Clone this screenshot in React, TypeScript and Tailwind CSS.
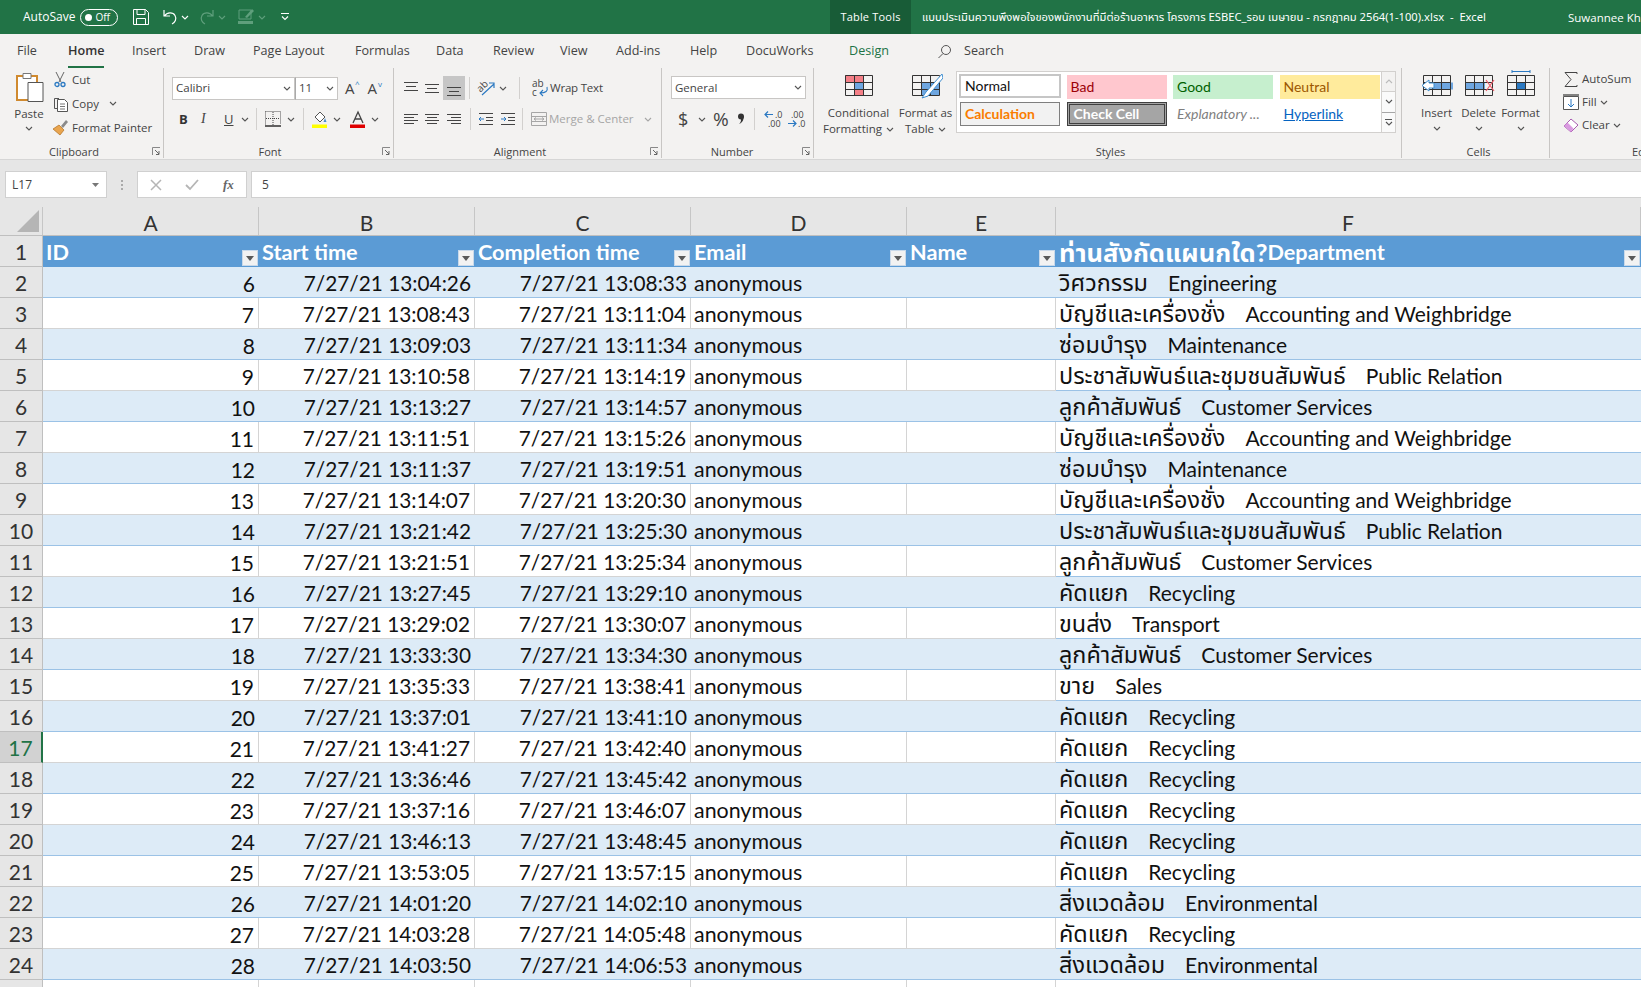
import React from "react";

const ui = { fontFamily: '"Open Sans","Noto Sans",sans-serif' };
const cal = { fontFamily: 'Lato,"Noto Sans","Noto Sans Thai","Liberation Sans",sans-serif' };

const Chev = ({ c = "#555", className = "" }: { c?: string; className?: string }) => (
  <svg width="8" height="5" viewBox="0 0 8 5" className={className}><path d="M1 1l3 3 3-3" fill="none" stroke={c} strokeWidth="1.1" /></svg>
);

const Launcher = () => (
  <svg width="9" height="9" viewBox="0 0 9 9" className="shrink-0"><path d="M0.5 8V0.5H8" fill="none" stroke="#888" /><path d="M3 3l4 4M7 4v3.5H4" fill="none" stroke="#666" /></svg>
);

const Sep = ({ className = "h-[22px] mx-[6px]" }: { className?: string }) => <div className={`w-px bg-[#d2d0ce] ${className}`} />;

const Lines = ({ kind }: { kind: string }) => {
  const rows: Record<string, number[][]> = {
    top: [[2, 16, 3], [4, 14, 7], [2, 16, 11]],
    mid: [[2, 16, 5], [4, 14, 9], [2, 16, 13]],
    bot: [[2, 16, 8], [4, 14, 12], [2, 16, 16]],
    l: [[2, 16, 4], [2, 12, 7], [2, 16, 10], [2, 12, 13]],
    c: [[2, 16, 4], [4, 14, 7], [2, 16, 10], [4, 14, 13]],
    r: [[2, 16, 4], [6, 16, 7], [2, 16, 10], [6, 16, 13]],
  };
  return (
    <svg width="18" height="18" viewBox="0 0 18 18">
      {rows[kind].map((r, i) => <path key={i} d={`M${r[0]} ${r[2] + 0.5}H${r[1]}`} stroke="#444" />)}
    </svg>
  );
};

const GridBox = ({ children, over }: { children?: React.ReactNode; over?: React.ReactNode }) => (
  <svg width="34" height="30" viewBox="0 0 34 30">
    {children}
    <path d="M3.500 5.500h27v20h-27zM12.500 5.500v20M21.500 5.500v20M3.500 12.500h27M3.500 19.500h27" fill="none" stroke="#333" />
    {over}
  </svg>
);

const GalleryCell = ({ className, children }: { className: string; children: React.ReactNode }) => (
  <div className={`h-[24px] flex items-center px-[4px] text-[14px] whitespace-nowrap ${className}`}>{children}</div>
);

const Group = ({ className, label, launcher, children, labelClass = "" }: { className: string; label: string; launcher?: boolean; children: React.ReactNode; labelClass?: string }) => (
  <div className={`flex flex-col h-[90px] shrink-0 border-r border-[#c8c6c4] ${className}`}>
    <div className="h-[76px] flex">{children}</div>
    <div className="h-[14px] flex items-center text-[11px] text-[#444] leading-none">
      <span className={`flex-1 text-center ${labelClass}`}>{label}</span>
      {launcher && <span className="mr-[2px]"><Launcher /></span>}
    </div>
  </div>
);

const tabs: [string, string][] = [
  ["File", "w-[68px] pl-[17px]"],
  ["Home", "w-[64px]"],
  ["Insert", "w-[62px]"],
  ["Draw", "w-[59px]"],
  ["Page Layout", "w-[102px]"],
  ["Formulas", "w-[81px]"],
  ["Data", "w-[57px]"],
  ["Review", "w-[67px]"],
  ["View", "w-[56px]"],
  ["Add-ins", "w-[74px]"],
  ["Help", "w-[56px]"],
  ["DocuWorks", "w-[103px]"],
];

const rows: [number, number, string, string, string, string][] = [
  [2, 6, "13:04:26", "13:08:33", "วิศวกรรม", "Engineering"],
  [3, 7, "13:08:43", "13:11:04", "บัญชีและเครื่องชั่ง", "Accounting and Weighbridge"],
  [4, 8, "13:09:03", "13:11:34", "ซ่อมบำรุง", "Maintenance"],
  [5, 9, "13:10:58", "13:14:19", "ประชาสัมพันธ์และชุมชนสัมพันธ์", "Public Relation"],
  [6, 10, "13:13:27", "13:14:57", "ลูกค้าสัมพันธ์", "Customer Services"],
  [7, 11, "13:11:51", "13:15:26", "บัญชีและเครื่องชั่ง", "Accounting and Weighbridge"],
  [8, 12, "13:11:37", "13:19:51", "ซ่อมบำรุง", "Maintenance"],
  [9, 13, "13:14:07", "13:20:30", "บัญชีและเครื่องชั่ง", "Accounting and Weighbridge"],
  [10, 14, "13:21:42", "13:25:30", "ประชาสัมพันธ์และชุมชนสัมพันธ์", "Public Relation"],
  [11, 15, "13:21:51", "13:25:34", "ลูกค้าสัมพันธ์", "Customer Services"],
  [12, 16, "13:27:45", "13:29:10", "คัดแยก", "Recycling"],
  [13, 17, "13:29:02", "13:30:07", "ขนส่ง", "Transport"],
  [14, 18, "13:33:30", "13:34:30", "ลูกค้าสัมพันธ์", "Customer Services"],
  [15, 19, "13:35:33", "13:38:41", "ขาย", "Sales"],
  [16, 20, "13:37:01", "13:41:10", "คัดแยก", "Recycling"],
  [17, 21, "13:41:27", "13:42:40", "คัดแยก", "Recycling"],
  [18, 22, "13:36:46", "13:45:42", "คัดแยก", "Recycling"],
  [19, 23, "13:37:16", "13:46:07", "คัดแยก", "Recycling"],
  [20, 24, "13:46:13", "13:48:45", "คัดแยก", "Recycling"],
  [21, 25, "13:53:05", "13:57:15", "คัดแยก", "Recycling"],
  [22, 26, "14:01:20", "14:02:10", "สิ่งแวดล้อม", "Environmental"],
  [23, 27, "14:03:28", "14:05:48", "คัดแยก", "Recycling"],
  [24, 28, "14:03:50", "14:06:53", "สิ่งแวดล้อม", "Environmental"],
];

const gridCols = "grid grid-cols-[43px_216px_216px_216px_216px_149px_585px]";

const Filter = () => (
  <span className="absolute right-[1px] bottom-[1px] w-[16px] h-[16px] bg-[#f2f2f2] border border-[#c9d9ea] flex items-center justify-center">
    <svg width="8" height="5" viewBox="0 0 8 5"><path d="M0 0h8L4 5z" fill="#595959" /></svg>
  </span>
);

const heads = ["ID", "Start time", "Completion time", "Email", "Name"];

export default function App() {
  return (
    <div className="w-[1641px] h-[987px] overflow-hidden flex flex-col bg-white text-[#333]" style={ui}>
      {/* Title bar */}
      <div className="h-[34px] shrink-0 bg-[#217346] flex items-center text-white text-[12px] whitespace-nowrap">
        <span className="ml-[23px]">AutoSave</span>
        <span className="ml-[5px] w-[38px] h-[17px] rounded-full border border-white flex items-center px-[4px] text-[10px] gap-[3px]">
          <span className="w-[7px] h-[7px] rounded-full bg-white" />Off
        </span>
        <svg width="18" height="18" viewBox="0 0 18 18" className="ml-[14px]"><path d="M1.500 1.500h12l3 3v12h-15zM5 1.500v5h8v-5M4.500 16.500v-6h9v6" fill="none" stroke="#fff" /></svg>
        <svg width="18" height="18" viewBox="0 0 18 18" className="ml-[11px]"><path d="M3 2v6h6M3.500 8C6 4 12 4 14 7.500s0 7-3 8.500" fill="none" stroke="#fff" strokeWidth="1.2" /></svg>
        <Chev c="#fff" className="ml-[2px]" />
        <svg width="18" height="18" viewBox="0 0 18 18" className="ml-[9px]"><path d="M15 2v6H9M14.500 8C12 4 6 4 4 7.500s0 7 3 8.500" fill="none" stroke="#5f9f7c" strokeWidth="1.200" /></svg>
        <Chev c="#5f9f7c" className="ml-[2px]" />
        <svg width="20" height="20" viewBox="0 0 20 20" className="ml-[10px]"><path d="M3 3h12v9H3z" fill="none" stroke="#5f9f7c" /><path d="M9 10l7-8 2 2-7 7z" fill="#5f9f7c" /><path d="M2 14h15v3H2z" fill="#5f9f7c" /></svg>
        <Chev c="#5f9f7c" className="ml-[2px]" />
        <svg width="10" height="10" viewBox="0 0 10 10" className="ml-[14px]"><path d="M1 1.500h8M2 4.500l3 3 3-3" fill="none" stroke="#fff" strokeWidth="1.100" /></svg>
        <div className="flex-1" />
        <div className="w-[81px] h-full bg-[#185c37] flex items-center justify-center text-[11px] tracking-[0.2px]">Table Tools</div>
        <span className="ml-[11px] w-[646px] text-[11.200px] overflow-hidden whitespace-pre" style={{ fontFamily: '"Noto Sans","Noto Sans Thai","Open Sans",sans-serif' }}>แบบประเมินความพึงพอใจของพนักงานที่มีต่อร้านอาหาร โครงการ ESBEC_รอบ เมษายน - กรกฎาคม 2564(1-100).xlsx  -  Excel</span>
        <span className="w-[73px] overflow-hidden text-[11.500px] mt-[2px]">Suwannee Khu</span>
      </div>

      {/* Tabs */}
      <div className="h-[34px] shrink-0 bg-[#f3f2f1] flex items-center text-[12.600px] text-[#444] whitespace-nowrap">
        {tabs.map(([t, w]) => (
          <div key={t} className={`h-full flex items-center relative ${w}`}>
            <span className={t === "Home" ? "font-semibold text-[#333] relative" : ""}>
              {t}
              {t === "Home" && <span className="absolute left-0 right-0 -bottom-[8px] h-[2.500px] bg-[#217346]" />}
            </span>
          </div>
        ))}
        <span className="text-[#217346] w-[88px]">Design</span>
        <svg width="15" height="15" viewBox="0 0 15 15"><circle cx="9" cy="6" r="4.500" fill="none" stroke="#555" /><path d="M6 9.500L1.500 14" stroke="#555" /></svg>
        <span className="ml-[12px]">Search</span>
      </div>

      {/* Ribbon */}
      <div className="h-[92px] shrink-0 bg-[#f3f2f1] flex text-[11.500px] text-[#444] whitespace-nowrap border-b border-[#d6d6d6] leading-none overflow-hidden">
        {/* Clipboard */}
        <Group className="w-[164px]" label="Clipboard" launcher labelClass="pr-[4px]">
          <div className="w-[50px] flex flex-col items-center pl-[8px] pt-[3px]">
            <svg width="32" height="32" viewBox="0 0 32 32" className="ml-[2px]">
              <path d="M3 5h20v24H3z" fill="#fff" stroke="#d08a2f" strokeWidth="2" />
              <path d="M9 2.500h8v5H9z" fill="#fff" stroke="#777" />
              <path d="M14 11.500h15v19H14z" fill="#fff" stroke="#555" />
            </svg>
            <span className="mt-[5px]">Paste</span>
            <Chev className="mt-[6px]" />
          </div>
          <div className="flex flex-col pl-[3px] pt-[3px] gap-[7px]">
            <div className="flex items-center h-[17px]">
              <svg width="14" height="17" viewBox="0 0 14 17"><path d="M3 1l5 10M11 1L6 11" stroke="#666" /><circle cx="4" cy="13.500" r="2" fill="none" stroke="#2b79c2" strokeWidth="1.300" /><circle cx="10" cy="13.500" r="2" fill="none" stroke="#2b79c2" strokeWidth="1.300" /></svg>
              <span className="ml-[5px]">Cut</span>
            </div>
            <div className="flex items-center h-[17px]">
              <svg width="17" height="17" viewBox="0 0 17 17"><path d="M6 3.500H1.500v10H4" fill="none" stroke="#555" /><path d="M4.500 4.500h7l3 3v9h-10z" fill="#fff" stroke="#555" /><path d="M7 9h5M7 11.500h5M7 14h5" stroke="#777" /></svg>
              <span className="ml-[2px]">Copy</span>
              <Chev className="ml-[10px]" />
            </div>
            <div className="flex items-center h-[17px] -ml-[1px]">
              <svg width="17" height="17" viewBox="0 0 17 17"><path d="M1 10l6-4 5 5-4 5z" fill="#e9a54f" stroke="#b06e1e" strokeWidth=".7" /><path d="M9 7l5-6 2 2-5 6z" fill="#8a8a8a" /></svg>
              <span className="ml-[3px]">Format Painter</span>
            </div>
          </div>
        </Group>

        {/* Font */}
        <Group className="w-[230px]" label="Font" launcher labelClass="pr-[6px]">
          <div className="flex flex-col pl-[8px] pt-[8px]">
            <div className="flex items-center h-[24px]">
              <div className="w-[123px] h-[23px] bg-white border border-[#c8c6c4] flex items-center justify-between pl-[3px] pr-[3px]"><span>Calibri</span><Chev /></div>
              <div className="w-[43px] h-[23px] bg-white border border-[#c8c6c4] border-l-[#aaa] flex items-center justify-between pl-[3px] pr-[3px]"><span>11</span><Chev /></div>
              <span className="ml-[7px] text-[15px] relative">A<span className="absolute -right-[5px] -top-[1px] text-[8px] text-[#2b79c2]">^</span></span>
              <span className="ml-[13px] text-[15px] relative">A<span className="absolute -right-[5px] -top-[1px] text-[8px] text-[#2b79c2]">v</span></span>
            </div>
            <div className="flex items-center h-[24px] mt-[7px] pl-[7px]">
              <span className="font-bold w-[22px] text-[13px] text-[#333]">B</span>
              <span className="italic w-[23px] text-[14px]" style={{ fontFamily: '"Liberation Serif",serif' }}>I</span>
              <span className="underline w-[15px] text-[13px]">U</span>
              <Chev className="ml-[2px]" />
              <Sep className="h-[22px] ml-[7px] mr-[8px]" />
              <svg width="16" height="16" viewBox="0 0 16 16"><path d="M.5.5h15v13M.5.5v13" fill="none" stroke="#555" strokeDasharray="1 1" /><path d="M8 1v14M1 7.500h14" stroke="#444" strokeDasharray="1 1" /><path d="M0 15h16" stroke="#222" strokeWidth="1.400" /></svg>
              <Chev className="ml-[6px]" />
              <Sep className="h-[22px] ml-[8px] mr-[7px]" />
              <svg width="18" height="19" viewBox="0 0 18 19"><path d="M4 7l5-5 5 5-5 5z" fill="#fff" stroke="#555" /><path d="M14 8l1.500 4h-3z" fill="#4a8fd0" /><path d="M1 14.500h15V18H1z" fill="#ffff00" /></svg>
              <Chev className="ml-[4px]" />
              <svg width="18" height="19" viewBox="0 0 18 19" className="ml-[8px]"><path d="M4 13L9 2l5 11M6 9h6" fill="none" stroke="#444" strokeWidth="1.300" /><path d="M1 14.500h15V18H1z" fill="#e00000" /></svg>
              <Chev className="ml-[4px]" />
            </div>
          </div>
        </Group>

        {/* Alignment */}
        <Group className="w-[268px]" label="Alignment" launcher labelClass="pr-[4px]">
          <div className="flex flex-col pl-[8px] pt-[8px]">
            <div className="flex items-center h-[24px]">
              <Lines kind="top" /><span className="w-[3px]" /><Lines kind="mid" /><span className="w-[2px]" />
              <span className="bg-[#c6c6c6] w-[22px] h-[24px] flex items-center justify-center"><Lines kind="bot" /></span>
              <Sep className="h-[22px] ml-[4px] mr-[6px]" />
              <svg width="20" height="18" viewBox="0 0 20 18"><text x="1" y="11" fontSize="10" fill="#444" transform="rotate(-45 6 8)" style={ui}>ab</text><path d="M6 16L18 5M13 4h5v5" fill="none" stroke="#2b79c2" strokeWidth="1.200" /></svg>
              <Chev className="ml-[3px]" />
              <Sep className="h-[22px] ml-[12px] mr-[11px]" />
              <svg width="18" height="20" viewBox="0 0 18 20"><text x="1" y="9" fontSize="10" fill="#444" style={ui}>ab</text><text x="1" y="18" fontSize="10" fill="#444" style={ui}>c</text><path d="M16 9c1 4-1 6-7 6M12 12l-3 3 3 3" fill="none" stroke="#2b79c2" strokeWidth="1.100" /></svg>
              <span className="ml-[1px] tracking-[-0.2px]">Wrap Text</span>
            </div>
            <div className="flex items-center h-[24px] mt-[7px]">
              <Lines kind="l" /><span className="w-[3px]" /><Lines kind="c" /><span className="w-[4px]" /><Lines kind="r" />
              <Sep className="h-[22px] ml-[7px] mr-[6px]" />
              <svg width="18" height="18" viewBox="0 0 18 18"><path d="M2 3.500h14M9 7.500h7M9 10.500h7M2 14.500h14" stroke="#444" /><path d="M7 9H2M4 7L2 9l2 2" fill="none" stroke="#2b79c2" /></svg>
              <span className="w-[4px]" />
              <svg width="18" height="18" viewBox="0 0 18 18"><path d="M2 3.500h14M9 7.500h7M9 10.500h7M2 14.500h14" stroke="#444" /><path d="M2 9h5M5 7l2 2-2 2" fill="none" stroke="#2b79c2" /></svg>
              <Sep className="h-[22px] ml-[5px] mr-[7px]" />
              <svg width="18" height="18" viewBox="0 0 18 18"><path d="M1.500 2.500h15v13h-15zM1.500 6.500h15M1.500 11.500h15" fill="none" stroke="#a6a6a6" /><path d="M4 9h10M6 7.500L4 9l2 1.500M12 7.500L14 9l-2 1.500" fill="none" stroke="#a6a6a6" /></svg>
              <span className="ml-[1px] text-[#a6a6a6]">Merge &amp; Center</span>
              <Chev c="#a6a6a6" className="ml-[10px]" />
            </div>
          </div>
        </Group>

        {/* Number */}
        <Group className="w-[152px]" label="Number" launcher>
          <div className="flex flex-col pl-[9px] pt-[8px]">
            <div className="w-[135px] h-[23px] bg-white border border-[#c8c6c4] flex items-center justify-between pl-[3px] pr-[3px] mb-[1px]"><span>General</span><Chev /></div>
            <div className="flex items-center h-[24px] mt-[7px] pl-[7px]">
              <span className="text-[18px] w-[15px]">$</span>
              <Chev className="ml-[5px]" />
              <span className="text-[19px] ml-[7px]">%</span>
              <svg width="8" height="12" viewBox="0 0 8 12" className="ml-[8px]"><circle cx="4" cy="3.500" r="3" fill="#333" /><path d="M6.500 3.500C7 7 5 10 2 11 4 9 4 8 4 6z" fill="#333" /></svg>
              <Sep className="h-[22px] ml-[9px] mr-[9px]" />
              <svg width="20" height="18" viewBox="0 0 20 18"><path d="M9 4.500H1M4 1.500L1 4.500l3 3" fill="none" stroke="#2b79c2" strokeWidth="1.200" /><text x="11" y="8" fontSize="9" fill="#444" style={ui}>.0</text><text x="4" y="17" fontSize="9" fill="#444" style={ui}>.00</text></svg>
              <span className="w-[3px]" />
              <svg width="20" height="18" viewBox="0 0 20 18"><path d="M1 13.500h8M6 10.500l3 3-3 3" fill="none" stroke="#2b79c2" strokeWidth="1.200" /><text x="4" y="8" fontSize="9" fill="#444" style={ui}>.00</text><text x="11" y="17" fontSize="9" fill="#444" style={ui}>.0</text></svg>
            </div>
          </div>
        </Group>

        {/* Styles */}
        <Group className="w-[588px]" label="Styles" labelClass="pl-[6px]">
          <div className="w-[77px] flex flex-col items-center pl-[12px] pt-[2px]">
            <GridBox>
              <path d="M3 5h18v7H3zM12 19h10v7H12z" fill="#f47f87" /><path d="M12 12h9v8h-9z" fill="#6ea6e0" />
            </GridBox>
            <span className="mt-[5px] text-center leading-[16px] text-[#444]">Conditional<br />Formatting <Chev className="inline ml-[1px]" /></span>
          </div>
          <div className="w-[66px] flex flex-col items-center pl-[3px] pt-[2px]">
            <GridBox over={<path d="M33 4L17 22l-4 6 6-2L34 8z" fill="#fff" stroke="#3f8fd0" />}>
              <path d="M12 12h18v14H12z" fill="#6ea6e0" />
            </GridBox>
            <span className="mt-[5px] text-center leading-[16px]">Format as<br />Table <Chev className="inline ml-[1px]" /></span>
          </div>
          <div className="-ml-[1px] mt-[3px] w-[440px] h-[62px] flex">
            <div className="flex-1 bg-white border border-[#d2d0ce] border-r-0 grid grid-cols-[100px_100px_100px_100px] gap-x-[6.500px] gap-y-[3px] pl-[3px] pt-[3px] content-start" style={cal}>
              <GalleryCell className="border-2 border-[#c6c6c6] text-[#111] -m-[1px]">Normal</GalleryCell>
              <GalleryCell className="bg-[#ffc7ce] text-[#9c0006]">Bad</GalleryCell>
              <GalleryCell className="bg-[#c6efce] text-[#006100]">Good</GalleryCell>
              <GalleryCell className="bg-[#ffeb9c] text-[#9c5700]">Neutral</GalleryCell>
              <GalleryCell className="bg-[#f2f2f2] border border-[#7f7f7f] text-[#fa7d00] font-bold">Calculation</GalleryCell>
              <GalleryCell className="bg-[#a5a5a5] border-[3px] border-double border-[#3f3f3f] text-white font-bold">Check Cell</GalleryCell>
              <GalleryCell className="text-[#7f7f7f] italic">Explanatory ...</GalleryCell>
              <GalleryCell className="text-[#0563c1] underline">Hyperlink</GalleryCell>
            </div>
            <div className="w-[15px] flex flex-col border border-[#d2d0ce]">
              <div className="flex-1 flex items-center justify-center border-b border-[#d2d0ce]"><Chev c="#bbb" className="rotate-180" /></div>
              <div className="flex-1 flex items-center justify-center border-b border-[#a6a6a6] bg-[#fafafa]"><Chev /></div>
              <div className="flex-1 flex flex-col items-center justify-center bg-[#fafafa]"><span className="w-[7px] h-px bg-[#555] mb-[1px]" /><Chev /></div>
            </div>
          </div>
        </Group>

        {/* Cells */}
        <Group className="w-[148px]" label="Cells" labelClass="pl-[6px]">
          <div className="flex pl-[17px] pt-[2px] gap-[7px]">
            {[
              { t: "Insert", b: <path d="M12 12.500h21v7H12z" fill="#6ea6e0" />, o: <path d="M14 13h-5v-3L2 15.500 9 21v-3h5z" fill="#fff" stroke="#3f8fd0" /> },
              { t: "Delete", b: <path d="M3 12.500h20v7H3z" fill="#6ea6e0" />, o: <path d="M24 10l8 11M32 10l-8 11" fill="none" stroke="#ef5b68" strokeWidth="1.200" /> },
              { t: "Format", b: <path d="M12 12.500h9v7h-9z" fill="#2b79c2" />, o: <path d="M8 1.500h18M8 0v3M26 0v3" stroke="#2b79c2" /> },
            ].map((c) => (
              <div key={c.t} className="w-[35px] flex flex-col items-center">
                <GridBox over={c.o}>{c.b}</GridBox>
                <span className="mt-[7px]">{c.t}</span>
                <Chev className="mt-[7px]" />
              </div>
            ))}
          </div>
        </Group>

        {/* Editing */}
        <div className="flex flex-col h-[90px] flex-1 overflow-hidden">
          <div className="h-[76px] flex flex-col pl-[13px] pt-[2px] gap-[5px]">
            <div className="flex items-center h-[18px]">
              <svg width="16" height="17" viewBox="0 0 16 17"><path d="M14 3V1.500H2l6 7-6 7h12V14" fill="none" stroke="#444" /></svg>
              <span className="ml-[3px]">AutoSum</span>
            </div>
            <div className="flex items-center h-[18px]">
              <svg width="16" height="16" viewBox="0 0 16 16"><path d="M.5 2.500h15v13H.5z" fill="#fff" stroke="#555" /><path d="M0 1h16" stroke="#444" strokeWidth="1.300" /><path d="M8 5v8M5 10l3 3 3-3" fill="none" stroke="#2b79c2" /></svg>
              <span className="ml-[3px]">Fill</span><Chev className="ml-[3px]" />
            </div>
            <div className="flex items-center h-[18px]">
              <svg width="16" height="16" viewBox="0 0 16 16"><path d="M1 9l7-7 7 6-7 7z" fill="#fff" stroke="#a85bb0" /><path d="M1 9l3.500-3.500 6 6L8 15z" fill="#d99be0" /></svg>
              <span className="ml-[3px]">Clear</span><Chev className="ml-[3px]" />
            </div>
          </div>
          <div className="h-[14px] text-[11px] pl-[82px] flex items-center">Editing</div>
        </div>
      </div>

      {/* Formula band */}
      <div className="h-[47px] shrink-0 bg-[#e6e6e6] flex items-start pt-[11px] text-[12px] text-[#444]">
        <div className="ml-[5px] w-[102px] h-[27px] bg-white border border-[#d0d0d0] flex items-center justify-between pl-[6px] pr-[7px]">
          <span>L17</span>
          <svg width="7" height="4" viewBox="0 0 7 4"><path d="M0 0h7L3.500 4z" fill="#777" /></svg>
        </div>
        <div className="w-[30px] h-[27px] flex flex-col items-center justify-center gap-[2px]">
          <span className="w-[2px] h-[2px] bg-[#aaa]" /><span className="w-[2px] h-[2px] bg-[#aaa]" /><span className="w-[2px] h-[2px] bg-[#aaa]" />
        </div>
        <div className="w-[110px] h-[27px] bg-white border border-[#d0d0d0] flex items-center">
          <svg width="12" height="12" viewBox="0 0 12 12" className="ml-[12px]"><path d="M1 1l10 10M11 1L1 11" stroke="#b5b5b5" strokeWidth="1.500" /></svg>
          <svg width="14" height="12" viewBox="0 0 14 12" className="ml-[23px]"><path d="M1 6l4 4 8-9" fill="none" stroke="#b5b5b5" strokeWidth="1.800" /></svg>
          <span className="ml-[24px] italic text-[13px] font-bold text-[#666]" style={{ fontFamily: '"Liberation Serif",serif' }}>fx</span>
        </div>
        <div className="ml-[4px] flex-1 h-[27px] bg-white border-y border-l border-[#d0d0d0] flex items-center pl-[10px]">5</div>
      </div>

      {/* Sheet */}
      <div className="flex-1 overflow-hidden" style={cal}>
        <div className={`${gridCols} h-[29px] bg-[#e6e6e6] text-[21px] text-[#333] border-b border-[#bfbfbf]`}>
          <div className="flex items-end justify-end pr-[3px] pb-[3px] border-r border-[#c6c6c6]">
            <svg width="22" height="22" viewBox="0 0 22 22"><path d="M22 0v22H0z" fill="#b5b5b5" /></svg>
          </div>
          {["A", "B", "C", "D", "E", "F"].map((l) => (
            <div key={l} className="flex items-center justify-center border-r border-[#c6c6c6] leading-none pt-[2px]">{l}</div>
          ))}
        </div>
        <div className={`${gridCols} h-[31px] bg-[#5b9bd5] text-white font-bold text-[21.700px] leading-none`}>
          <div className="bg-[#e6e6e6] text-[#333] text-[21px] font-normal flex items-center justify-center border-r border-[#bfbfbf] border-b">1</div>
          {heads.map((h) => (
            <div key={h} className="relative flex items-center pl-[3px] pt-[2px] whitespace-nowrap">{h}<Filter /></div>
          ))}
          <div className="relative flex items-center pl-[3px] pt-[2px] whitespace-nowrap"><span className="text-[25.500px]">ท่านสังกัดแผนกใด?</span>Department<Filter /></div>
        </div>
        {rows.map(([n, id, s, e, th, en]) => {
          const band = n % 2 === 0;
          const sel = n === 17;
          const line = band ? "" : "border-r border-[#d4d4d4]";
          return (
            <div key={n} className={`${gridCols} h-[31px] text-[21px] text-[#111] leading-none whitespace-pre ${band ? "bg-[#ddebf7]" : "bg-white"}`}>
              <div className={`flex items-center justify-center border-b border-[#bfbfbf] ${sel ? "bg-[#d2d2d2] text-[#217346] border-r-2 border-r-[#217346]" : "bg-[#e6e6e6] text-[#333] border-r border-r-[#bfbfbf]"}`}>{n}</div>
              <div className={`flex items-center justify-end pr-[4px] pt-[2px] border-b border-[#9bc2e6] ${line}`}>{id}</div>
              <div className={`flex items-center justify-end pr-[4px] pt-[2px] text-[20.800px] border-b border-[#9bc2e6] ${line}`}>7/27/21 {s}</div>
              <div className={`flex items-center justify-end pr-[4px] pt-[2px] text-[20.800px] border-b border-[#9bc2e6] ${line}`}>7/27/21 {e}</div>
              <div className={`flex items-center pl-[3px] pt-[3px] text-[21.400px] border-b border-[#9bc2e6] ${line}`}>anonymous</div>
              <div className={`border-b border-[#9bc2e6] ${line}`} />
              <div className="flex items-center pl-[3px] pt-[1px] border-b border-[#9bc2e6]"><span className="text-[23.400px]">{th}</span><span className="ml-[20px]">{en}</span></div>
            </div>
          );
        })}
        <div className={`${gridCols} h-[31px] bg-white`}>
          <div className="bg-[#e6e6e6] border-r border-[#bfbfbf]" />
          <div className="border-r border-[#d4d4d4]" />
          <div className="border-r border-[#d4d4d4]" />
          <div className="border-r border-[#d4d4d4]" />
          <div className="border-r border-[#d4d4d4]" />
          <div className="border-r border-[#d4d4d4]" />
          <div />
        </div>
      </div>
    </div>
  );
}
